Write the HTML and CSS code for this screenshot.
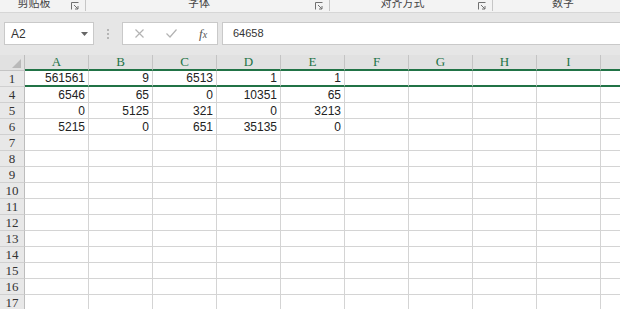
FILE: index.html
```html
<!DOCTYPE html>
<html lang="zh-CN">
<head>
  <meta charset="UTF-8" />
  <title>工作簿</title>
  <link rel="stylesheet" href="styles.css">
</head>
<body>
  <!-- ribbon group labels (top cut off) -->
  <div class="ribbon">
    <div class="group g1"><span class="label">剪贴板</span>
      <svg class="launcher" width="8" height="8" viewBox="0 0 8 8"><path d="M0.5 7.5V0.5H7.5" /><path d="M3 3L7 7M7 4V7H4" /></svg>
    </div>
    <div class="group g2"><span class="label">字体</span>
      <svg class="launcher" width="8" height="8" viewBox="0 0 8 8"><path d="M0.5 7.5V0.5H7.5" /><path d="M3 3L7 7M7 4V7H4" /></svg>
    </div>
    <div class="group g3"><span class="label">对齐方式</span>
      <svg class="launcher" width="8" height="8" viewBox="0 0 8 8"><path d="M0.5 7.5V0.5H7.5" /><path d="M3 3L7 7M7 4V7H4" /></svg>
    </div>
    <div class="group g4"><span class="label">数字</span></div>
  </div>

  <div class="formula-bar">
    <div class="name-box">
      <span>A2</span>
      <svg width="7" height="4" viewBox="0 0 7 4"><path d="M0 0H7L3.5 4Z" fill="#666" /></svg>
    </div>
    <div class="grip"><i></i><i></i><i></i></div>
    <div class="fn-box">
      <svg width="9" height="9" viewBox="0 0 9 9"><path d="M0.5 0.5L8.5 8.5M8.5 0.5L0.5 8.5" /></svg>
      <svg width="11" height="9" viewBox="0 0 11 9"><path d="M0.5 4.5L4 8L10.5 0.5" /></svg>
      <span class="fx">f<span>x</span></span>
    </div>
    <div class="formula-input">64658</div>
  </div>

  <div class="sheet">
    <table class="grid">
      <tr class="head">
        <th class="corner"><span class="tri"></span></th>
        <th>A</th><th>B</th><th>C</th><th>D</th><th>E</th><th>F</th><th>G</th><th>H</th><th>I</th><th>J</th>
      </tr>
      <tr class="frozen">
        <th>1</th><td>561561</td><td>9</td><td>6513</td><td>1</td><td>1</td><td></td><td></td><td></td><td></td><td></td>
      </tr>
      <tr><th>4</th><td>6546</td><td>65</td><td>0</td><td>10351</td><td>65</td><td></td><td></td><td></td><td></td><td></td></tr>
      <tr><th>5</th><td>0</td><td>5125</td><td>321</td><td>0</td><td>3213</td><td></td><td></td><td></td><td></td><td></td></tr>
      <tr><th>6</th><td>5215</td><td>0</td><td>651</td><td>35135</td><td>0</td><td></td><td></td><td></td><td></td><td></td></tr>
      <tr><th>7</th><td></td><td></td><td></td><td></td><td></td><td></td><td></td><td></td><td></td><td></td></tr>
      <tr><th>8</th><td></td><td></td><td></td><td></td><td></td><td></td><td></td><td></td><td></td><td></td></tr>
      <tr><th>9</th><td></td><td></td><td></td><td></td><td></td><td></td><td></td><td></td><td></td><td></td></tr>
      <tr><th>10</th><td></td><td></td><td></td><td></td><td></td><td></td><td></td><td></td><td></td><td></td></tr>
      <tr><th>11</th><td></td><td></td><td></td><td></td><td></td><td></td><td></td><td></td><td></td><td></td></tr>
      <tr><th>12</th><td></td><td></td><td></td><td></td><td></td><td></td><td></td><td></td><td></td><td></td></tr>
      <tr><th>13</th><td></td><td></td><td></td><td></td><td></td><td></td><td></td><td></td><td></td><td></td></tr>
      <tr><th>14</th><td></td><td></td><td></td><td></td><td></td><td></td><td></td><td></td><td></td><td></td></tr>
      <tr><th>15</th><td></td><td></td><td></td><td></td><td></td><td></td><td></td><td></td><td></td><td></td></tr>
      <tr><th>16</th><td></td><td></td><td></td><td></td><td></td><td></td><td></td><td></td><td></td><td></td></tr>
      <tr><th>17</th><td></td><td></td><td></td><td></td><td></td><td></td><td></td><td></td><td></td><td></td></tr>
    </table>
  </div>
</body>
</html>
```

FILE: styles.css
```css
* {
  box-sizing: border-box;
}

body {
  margin: 0;
  width: 620px;
  height: 309px;
  overflow: hidden;
  background: #e6e6e6;
  font-family: "Liberation Sans", Arial, sans-serif;
  color: #333;
}

/* ribbon */
.ribbon {
  display: flex;
  height: 13px;
  background: #f3f3f3;
  border-bottom: 1px solid #d6d6d6;
  overflow: hidden;
  white-space: nowrap;
}

.group {
  display: flex;
  align-items: flex-start;
  height: 11px;
  border-right: 1px solid #c6c6c6;
  flex-shrink: 0;
}

.g1 { width: 86px; }
.g2 { width: 244px; }
.g3 { width: 163px; }
.g4 { width: 140px; border-right: none; }

.label {
  flex: 1;
  text-align: center;
  font-family: "Noto Sans CJK SC", sans-serif;
  font-size: 11px;
  line-height: 11px;
  margin-top: -3px;
  color: #444;
}

.launcher {
  margin: 2px 6px 0 3px;
  fill: none;
  stroke: #707070;
  stroke-width: 1;
}

/* formula bar */
.formula-bar {
  display: flex;
  padding: 9px 0 10px 4px;
}

.name-box, .fn-box, .formula-input {
  height: 23px;
  background: #fff;
  border: 1px solid #c9c9c9;
}

.name-box {
  width: 90px;
  display: flex;
  align-items: center;
  justify-content: space-between;
  padding: 0 5px 0 6px;
  font-size: 12px;
}

.grip {
  width: 28px;
  display: flex;
  flex-direction: column;
  align-items: center;
  justify-content: center;
  gap: 2px;
}

.grip i {
  width: 2px;
  height: 2px;
  background: #b5b5b5;
}

.fn-box {
  width: 96px;
  margin-right: 4px;
  display: flex;
  align-items: center;
  padding-left: 12px;
}

.fn-box svg {
  fill: none;
  stroke: #b3b3b3;
  stroke-width: 1.2;
}

.fn-box svg + svg {
  margin-left: 22px;
}

.fx {
  margin-left: 22px;
  font-family: "Liberation Serif", serif;
  font-style: italic;
  font-size: 13px;
  color: #555;
}

.fx span {
  font-size: 10px;
}

.formula-input {
  flex: 1;
  border-right: none;
  font-size: 11px;
  line-height: 21px;
  padding-left: 10px;
}

/* sheet grid */
.sheet {
  background: #fff;
}

.grid {
  border-collapse: separate;
  border-spacing: 0;
  table-layout: fixed;
  width: 665px;
}

.grid th, .grid td {
  height: 16px;
  padding: 0 3px;
  white-space: nowrap;
  overflow: hidden;
  border-right: 1px solid #d4d4d4;
  border-bottom: 1px solid #d4d4d4;
}

.grid td {
  font-size: 12px;
  line-height: 14px;
  text-align: right;
  color: #222;
}

.grid th {
  font-family: "Liberation Serif", serif;
  font-weight: normal;
  font-size: 13px;
  line-height: 14px;
  color: #333;
  background: #e8e8e8;
  border-color: #d0d0d0;
  text-align: center;
  padding: 0;
}

.grid tr > th:first-child {
  width: 25px;
  border-right-color: #bdbdbd;
}

.head th {
  width: 64px;
  color: #217346;
  background: #e1e1e1;
  border-right-color: #c4c4c4;
  border-bottom: 2px solid #217346;
}

.head th.corner {
  position: relative;
  border-bottom: 1px solid #c4c4c4;
}

.tri {
  position: absolute;
  right: 3px;
  bottom: 2px;
  width: 0;
  height: 0;
  border-left: 9px solid transparent;
  border-bottom: 9px solid #b9b9b9;
}

.frozen td {
  border-bottom: 2px solid #217346;
}
```
